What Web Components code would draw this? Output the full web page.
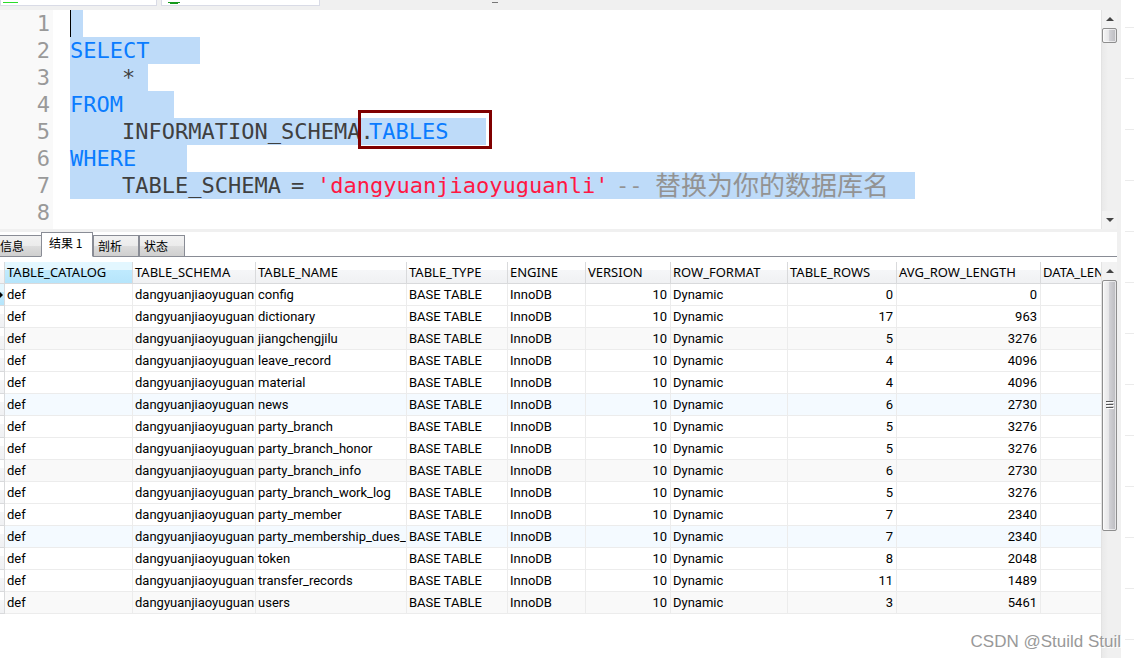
<!DOCTYPE html>
<html lang="zh-CN">
<head>
<meta charset="utf-8">
<title>Query</title>
<style>
  body {
    margin: 0;
    background: #fff;
    color: #000;
    font-family: Roboto, "Noto Sans CJK SC", sans-serif;
    font-size: 13px;
  }
</style>
</head>
<body>
<query-window></query-window>

<script>
const KEYWORD = '#0a7cff';
const PLAIN = '#404040';
const STRING = '#ff1744';
const COMMENT = '#939393';

// each line: selected columns, then [text, columns, colour, class]
const LINES = [
  { selected: 1, tokens: [] },
  { selected: 10, tokens: [['SELECT', 6, KEYWORD]] },
  { selected: 6, tokens: [['', 4], ['*', 1, PLAIN]] },
  { selected: 8, tokens: [['FROM', 4, KEYWORD]] },
  { selected: 32, tokens: [['', 4], ['INFORMATION_SCHEMA.', 19, PLAIN], ['TABLES', 6, KEYWORD, 'marked']] },
  { selected: 9, tokens: [['WHERE', 5, KEYWORD]] },
  { selected: 65, tokens: [['', 4], ['TABLE_SCHEMA', 13, PLAIN], ['=', 2, PLAIN], ["'dangyuanjiaoyuguanli'", 23, STRING], ['--', 3, COMMENT], ['替换为你的数据库名', 18, COMMENT, 'cjk']] },
  { selected: 0, tokens: [] }
];

const COLUMNS = [
  ['TABLE_CATALOG', 128], ['TABLE_SCHEMA', 123], ['TABLE_NAME', 151],
  ['TABLE_TYPE', 101], ['ENGINE', 78], ['VERSION', 85], ['ROW_FORMAT', 117],
  ['TABLE_ROWS', 109], ['AVG_ROW_LENGTH', 144], ['DATA_LEN', 0]
];

const TABLES = [
  ['config', 0, 0], ['dictionary', 17, 963], ['jiangchengjilu', 5, 3276],
  ['leave_record', 4, 4096], ['material', 4, 4096], ['news', 6, 2730],
  ['party_branch', 5, 3276], ['party_branch_honor', 5, 3276],
  ['party_branch_info', 6, 2730], ['party_branch_work_log', 5, 3276],
  ['party_member', 7, 2340], ['party_membership_dues_r', 7, 2340],
  ['token', 8, 2048], ['transfer_records', 11, 1489], ['users', 3, 5461]
];

class ScrollBar extends HTMLElement {
  constructor() {
    super();
    this.attachShadow({ mode: 'open' }).innerHTML = `
      <style>
        :host {
          display: flex;
          flex-direction: column;
          flex: none;
          box-sizing: border-box;
          width: 16px;
          border-left: 1px solid #e3e3e3;
          background: linear-gradient(90deg, #e9e9e9, #f0f0f0 40%, #f0f0f0);
        }
        button {
          flex: none;
          height: 18px;
          padding: 0;
          border: 0;
          background: #f2f2f2;
          line-height: 0;
        }
        .thumb {
          flex: none;
          box-sizing: border-box;
          display: grid;
          place-content: center;
          height: var(--thumb, 15px);
          border: 1px solid #8e8e8e;
          border-radius: 2px;
          background: linear-gradient(90deg, #f5f5f5, #e6e6e8 45%, #d0d0d4 50%, #bcbcc0);
          box-shadow: inset 0 0 0 1px #ffffff99;
        }
        .grip { display: none; }
        :host([long]) .grip { display: block; }
        .down { margin-top: auto; }
        :host([long]) .down { display: none; }
      </style>
      <button type="button" aria-label="Scroll up">
        <svg width="8" height="5" viewBox="0 0 8 5"><path d="M4 0L8 4H0Z" fill="#444"/></svg>
      </button>
      <div class="thumb">
        <svg class="grip" width="8" height="9" viewBox="0 0 8 9">
          <path d="M0 .5H7M0 3.500H7M0 6.500H7" stroke="#555"/>
          <path d="M1 1.500H8M1 4.500H8M1 7.500H8" stroke="#fff"/>
        </svg>
      </div>
      <button type="button" class="down" aria-label="Scroll down">
        <svg width="8" height="5" viewBox="0 0 8 5"><path d="M0 0H8L4 4Z" fill="#444"/></svg>
      </button>
    `;
  }
}

class FileTabs extends HTMLElement {
  constructor() {
    super();
    this.attachShadow({ mode: 'open' }).innerHTML = `
      <style>
        :host {
          display: flex;
          gap: 4px;
          height: 10px;
          background: #f0f0f0;
        }
        .tab {
          box-sizing: border-box;
          width: 157px;
          height: 6px;
          padding-left: 2px;
          border: 1px solid #d9dbe6;
          border-top: 0;
          background: #fff;
          line-height: 0;
        }
        .tab + .tab { width: 159px; padding-left: 6px; }
        .rest { margin-left: 168px; line-height: 0; }
      </style>
      <div class="tab"><svg width="15" height="2"><path d="M0 0H15V1H0Z" fill="#2bdc2b"/></svg></div>
      <div class="tab"><svg width="12" height="2"><path d="M0 0H12V1H10V2H2V1H0Z" fill="#169a1c"/></svg></div>
      <div class="rest"><svg width="7" height="2"><path d="M0 0H6V1H0Z" fill="#777"/></svg></div>
    `;
  }
}

class SqlEditor extends HTMLElement {
  constructor() {
    super();
    const lines = LINES.map(({ selected, tokens }, i) => `
      <div class="line">
        <span class="number">${i + 1}</span>
        <code style="--cols: ${selected}">${tokens.map(([text, cols, color, name]) =>
          `<span class="token ${name || ''}" style="--cols: ${cols}; color: ${color || PLAIN}">${text}</span>`
        ).join('')}</code>
      </div>`).join('');

    this.attachShadow({ mode: 'open' }).innerHTML = `
      <style>
        :host {
          display: flex;
          border-bottom: 3px solid #f0f0f0;
          font: 22px/27px "DejaVu Sans Mono", "Noto Sans CJK SC", monospace;
        }
        .lines {
          flex: 1;
          min-width: 0;
          padding-bottom: 3px;
          background: linear-gradient(90deg, #f9f9f9 53px, #fff 53px);
        }
        .line { display: flex; height: 27px; }
        .number {
          box-sizing: border-box;
          flex: none;
          width: 70px;
          padding-right: 20px;
          color: #999;
          text-align: right;
        }
        code {
          display: flex;
          width: calc(var(--cols) * 13px);
          background: #bedbf9;
          font: inherit;
        }
        .line:first-child code {
          box-sizing: border-box;
          border-left: 1px solid #000;
        }
        .token {
          flex: none;
          width: calc(var(--cols) * 13px);
          white-space: pre;
        }
        .cjk { font: 26px/24px "Noto Sans CJK SC", sans-serif; }
        .marked { position: relative; }
        .marked::after {
          content: "";
          position: absolute;
          inset: -8px -45px -4px -11px;
          border: 3px solid #800000;
        }
      </style>
      <div class="lines">${lines}</div>
      <scroll-bar></scroll-bar>
    `;
  }
}

class ResultTab extends HTMLElement {
  constructor() {
    super();
    this.attachShadow({ mode: 'open' }).innerHTML = `
      <style>
        :host { display: block; }
        button {
          box-sizing: border-box;
          width: 46px;
          height: 22px;
          padding: 0 0 0 4px;
          border: 1px solid #898c95;
          background: linear-gradient(#f2f2f2, #ebebeb 50%, #dddddd 50%, #cfcfcf);
          color: #000;
          font: 12px/20px "Noto Sans CJK SC", sans-serif;
          text-align: left;
        }
        :host([first]) button { width: 41px; padding-left: 0; border-left: 0; border-right: 0; }
        :host([active]) button {
          width: 52px;
          height: 25px;
          padding: 0 0 4px 7px;
          border-bottom-color: #fff;
          background: #fff;
        }
      </style>
      <button type="button" role="tab"><slot></slot></button>
    `;
  }
}

class ResultGrid extends HTMLElement {
  constructor() {
    super();
    const cols = COLUMNS.map(([, width]) => width ? `<col style="width: ${width}px">` : '<col>').join('');
    const heads = COLUMNS.map(([name]) => `<th scope="col">${name}</th>`).join('');
    const rows = TABLES.map(([name, count, length], i) => `
      <tr>
        <th scope="row">${i === 0 ? '<svg width="3" height="6"><path d="M0 0L3 3L0 6Z"/></svg>' : ''}</th>
        <td>def</td><td>dangyuanjiaoyuguan</td><td>${name}</td>
        <td>BASE TABLE</td><td>InnoDB</td><td class="num">10</td><td>Dynamic</td>
        <td class="num">${count}</td><td class="num">${length}</td><td></td>
      </tr>`).join('');

    this.attachShadow({ mode: 'open' }).innerHTML = `
      <style>
        :host { display: flex; flex: 1; }
        .view { flex: 1; min-width: 0; }
        table {
          width: 100%;
          table-layout: fixed;
          border-collapse: separate;
          border-spacing: 0;
        }
        th, td {
          box-sizing: border-box;
          height: 22px;
          padding: 0 0 0 2px;
          border: 0 solid #ececec;
          border-width: 0 1px 1px 0;
          overflow: hidden;
          font-weight: normal;
          line-height: 21px;
          text-align: left;
          white-space: nowrap;
        }
        thead th {
          border-color: #d9dadc;
          background: linear-gradient(#fff 40%, #f5f6f8 40%, #f0f1f3);
          font-family: "Noto Sans", sans-serif;
        }
        thead th:nth-child(2) { background: linear-gradient(#e3f7ff 40%, #bfeafe 40%, #b6e5fb); }
        tbody th {
          padding: 0;
          border-color: #d9dadc;
          background: linear-gradient(#fff 40%, #f5f6f8 40%, #f0f1f3);
          line-height: 0;
        }
        tbody tr:first-child th { background: linear-gradient(#e3f7ff 40%, #bfeafe 40%, #b6e5fb); }
        tr > :last-child { border-right: 0; }
        tbody tr:nth-child(6n + 3) td { background: #f9f9f9; }
        tbody tr:nth-child(6n) td { background: #f4faff; }
        .num { padding: 0 3px 0 0; text-align: right; }
        scroll-bar { --thumb: 251px; }
      </style>
      <div class="view">
        <table>
          <colgroup><col style="width: 5px">${cols}</colgroup>
          <thead><tr><th></th>${heads}</tr></thead>
          <tbody>${rows}</tbody>
        </table>
      </div>
      <scroll-bar long></scroll-bar>
    `;
  }
}

class QueryWindow extends HTMLElement {
  constructor() {
    super();
    this.attachShadow({ mode: 'open' }).innerHTML = `
      <style>
        :host {
          position: relative;
          display: flex;
          height: 100vh;
          overflow: hidden;
        }
        main {
          display: flex;
          flex-direction: column;
          flex: 1;
          min-width: 0;
          box-sizing: border-box;
          border-right: 4px solid #f0f0f0;
        }
        .tabs {
          display: flex;
          align-items: flex-end;
          height: 25px;
          margin-bottom: 5px;
          background: linear-gradient(#898c95, #898c95) bottom / 100% 1px no-repeat;
        }
        aside {
          width: 9px;
          margin-left: 4px;
          background: repeating-linear-gradient(#fff 0 27px, #ebebeb 27px 28px, #fff 28px 51px);
        }
        .watermark {
          position: absolute;
          right: 13px;
          bottom: 4px;
          color: #999;
          font: 17px/24px "Liberation Sans", sans-serif;
          text-shadow: 1px 1px #fff;
        }
      </style>
      <main>
        <file-tabs></file-tabs>
        <sql-editor></sql-editor>
        <div class="tabs" role="tablist">
          <result-tab first>信息</result-tab>
          <result-tab active>结果 1</result-tab>
          <result-tab>剖析</result-tab>
          <result-tab>状态</result-tab>
        </div>
        <result-grid></result-grid>
      </main>
      <aside></aside>
      <div class="watermark">CSDN @Stuild Stuil</div>
    `;
  }
}

customElements.define('scroll-bar', ScrollBar);
customElements.define('file-tabs', FileTabs);
customElements.define('sql-editor', SqlEditor);
customElements.define('result-tab', ResultTab);
customElements.define('result-grid', ResultGrid);
customElements.define('query-window', QueryWindow);
</script>
</body>
</html>
